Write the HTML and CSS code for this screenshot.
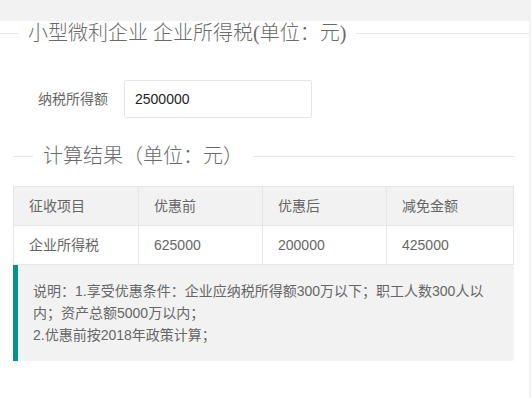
FILE: index.html
```html
<!DOCTYPE html>
<html lang="zh-CN">
<head>
  <meta charset="UTF-8">
  <meta name="viewport" content="width=device-width, initial-scale=1.0">
  <title>小型微利企业 企业所得税</title>
  <link rel="stylesheet" href="styles.css">
</head>
<body>
  <div class="card">
    <div class="field-title first">
      <span class="line short"></span>
      <span class="legend">小型微利企业 企业所得税(单位：元)</span>
      <span class="line"></span>
    </div>

    <div class="form-row">
      <label class="form-label" for="income">纳税所得额</label>
      <input class="form-input" type="text" id="income" value="2500000">
    </div>

    <div class="card-body">
      <div class="field-title">
        <span class="line"></span>
        <span class="legend">计算结果（单位：元）</span>
        <span class="line grow"></span>
      </div>

      <table class="result-table">
        <colgroup>
          <col class="col-item">
          <col class="col-num">
          <col class="col-num">
          <col>
        </colgroup>
        <thead>
          <tr>
            <th>征收项目</th>
            <th>优惠前</th>
            <th>优惠后</th>
            <th>减免金额</th>
          </tr>
        </thead>
        <tbody>
          <tr>
            <td>企业所得税</td>
            <td>625000</td>
            <td>200000</td>
            <td>425000</td>
          </tr>
        </tbody>
      </table>

      <blockquote class="quote">
        说明：1.享受优惠条件：企业应纳税所得额300万以下；职工人数300人以内；资产总额5000万以内；<br>
        2.优惠前按2018年政策计算；
      </blockquote>
    </div>
  </div>
</body>
</html>
```

FILE: styles.css
```css
* {
  box-sizing: border-box;
  margin: 0;
  padding: 0;
}

html, body {
  height: 100%;
}

body {
  background-color: #f2f2f2;
  padding: 21px 2px 0 0;
  font-family: "Liberation Sans", "Noto Sans CJK SC", sans-serif;
  font-size: 14px;
  line-height: 20px;
  color: #666;
  overflow: hidden;
}

.card {
  background-color: #fff;
  border-top-right-radius: 2px;
  min-height: 100%;
}

/* fieldset style title with line on both sides */
.field-title {
  display: flex;
  align-items: center;
  height: 24px;
}

.field-title .line {
  height: 1px;
  width: 20px;
  background-color: #e6e6e6;
}

.field-title .line.short {
  width: 18px;
}

.field-title .line:last-child {
  flex: 1;
}

.legend {
  padding: 0 10px;
  font-family: "Liberation Serif", "Noto Sans CJK SC", serif;
  font-size: 20px;
  font-weight: 300;
  line-height: 24px;
  color: #6a6a6a;
  white-space: nowrap;
}

.form-row {
  display: flex;
  align-items: center;
  margin-top: 35px;
  height: 38px;
}

.form-label {
  width: 108px;
  text-align: right;
  color: #666;
}

.form-input {
  margin-left: 16px;
  width: 188px;
  height: 38px;
  padding: 0 10px;
  border: 1px solid #e6e6e6;
  border-radius: 2px;
  font-family: "Liberation Sans", "Noto Sans CJK SC", sans-serif;
  font-size: 14px;
  color: #222;
  outline: none;
}

.card-body {
  padding: 26px 15px 0 13px;
}

.result-table {
  margin-top: 18px;
  width: 501px;
  table-layout: fixed;
  border-collapse: collapse;
}

.result-table .col-item {
  width: 125px;
}

.result-table .col-num {
  width: 124px;
}

.result-table th,
.result-table td {
  border: 1px solid #e6e6e6;
  padding: 9px 15px;
  line-height: 20px;
  text-align: left;
  font-weight: 400;
  color: #666;
}

.result-table thead tr {
  background-color: #f2f2f2;
}

.quote {
  padding: 15px;
  line-height: 22px;
  border-left: 5px solid #009688;
  border-radius: 0 2px 2px 0;
  background-color: #f2f2f2;
  color: #666;
}
```
